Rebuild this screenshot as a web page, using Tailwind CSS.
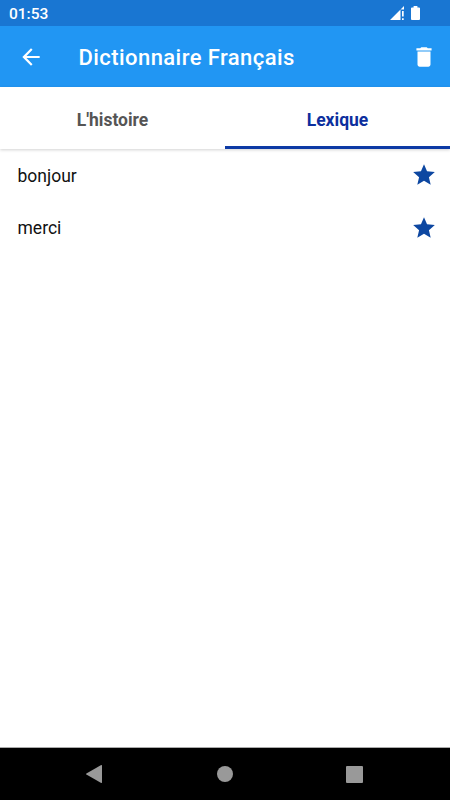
<!DOCTYPE html>
<html lang="fr">
  <head>
    <meta charset="UTF-8">
    <meta name="viewport" content="width=device-width, initial-scale=1.0">
    <title>Dictionnaire Français</title>
    <script src="https://cdn.jsdelivr.net/npm/@tailwindcss/browser@4"></script>
  </head>
  <body class="font-[Roboto,sans-serif] bg-white h-screen flex flex-col overflow-hidden">

    <!-- status bar -->
    <div class="h-[26px] shrink-0 bg-[#1976d2] text-white flex items-center justify-between pl-[9px] pr-[30.5px]">
      <span class="text-[15.5px] leading-none font-medium pt-[3px]">01:53</span>
      <div class="flex items-center gap-[7px]">
        <svg class="w-[14px] h-[14px]" viewBox="0 0 14 14" fill="currentColor">
          <path d="M0 14 L14 0 V3.500 H10.500 V14Z" />
          <path d="M12 5h1.700v5.500H12zM12 12.200h1.700V14H12z" />
        </svg>
        <svg class="w-[9px] h-[14px]" viewBox="0 0 9 14" fill="currentColor">
          <path d="M2.6 0h3.8v1.4h1.7c.5 0 .9.4.9.9v10.8c0 .5-.4.9-.9.9H.9c-.5 0-.9-.4-.9-.9V2.3c0-.5.4-.9.9-.9h1.7z" />
        </svg>
      </div>
    </div>

    <header class="h-[61px] shrink-0 bg-[#2196f3] text-white flex items-center pl-[18px] pr-[13px]">
      <button aria-label="Retour">
        <svg class="w-[26px] h-[26px]" viewBox="0 0 24 24" fill="currentColor">
          <path d="M20 11H7.83l5.59-5.59L12 4l-8 8 8 8 1.410-1.410L7.830 13H20v-2z" />
        </svg>
      </button>
      <h1 class="ml-[34.5px] pt-[3px] flex-1 text-[22px] leading-none font-medium tracking-[0.43px] whitespace-nowrap">Dictionnaire Français</h1>
      <button aria-label="Supprimer">
        <svg class="w-[26px] h-[26px]" viewBox="0 0 24 24" fill="currentColor">
          <path d="M6 19c0 1.100.9 2 2 2h8c1.100 0 2-.9 2-2V7H6v12zM19 4h-3.500l-1-1h-5l-1 1H5v2h14V4z" />
        </svg>
      </button>
    </header>

    <nav class="h-[61.5px] shrink-0 grid grid-cols-2 text-[17.5px] font-bold shadow-[0_1px_3px_rgba(0,0,0,0.18)]">
      <a href="#" class="flex items-center justify-center pt-[7px] text-[#555555] border-b-[3px] border-transparent">L'histoire</a>
      <a href="#" class="flex items-center justify-center pt-[7px] text-[#0d2f9e] border-b-[3px] border-[#0d3aa5]">Lexique</a>
    </nav>

    <main class="flex-1">
      <ul class="text-[17.5px] text-[#111111]">
        <li class="h-[52.5px] flex items-center justify-between pl-[17.5px] pr-[13px]">
          <span class="pt-[2px]">bonjour</span>
          <svg class="w-[26px] h-[27px] pt-px text-[#0d47a1]" viewBox="0 0 24 24" fill="currentColor">
            <path d="M12 17.270L18.180 21l-1.640-7.030L22 9.240l-7.190-.61L12 2 9.190 8.630 2 9.240l5.460 4.730L5.820 21z" />
          </svg>
        </li>
        <li class="h-[52.5px] flex items-center justify-between pl-[17.5px] pr-[13px]">
          <span class="pt-[2px]">merci</span>
          <svg class="w-[26px] h-[27px] pt-px text-[#0d47a1]" viewBox="0 0 24 24" fill="currentColor">
            <path d="M12 17.270L18.180 21l-1.640-7.030L22 9.240l-7.190-.61L12 2 9.190 8.630 2 9.240l5.460 4.730L5.820 21z" />
          </svg>
        </li>
      </ul>
    </main>

    <!-- system navigation -->
    <footer class="h-[53px] shrink-0 bg-black border-t border-[#aaaaaa] text-[#999999] flex items-center justify-between pl-[86px] pr-[87px]">
      <svg class="w-[16px] h-[18px]" viewBox="0 0 16 18" fill="currentColor">
        <path d="M15.200 0.100 C15.700 -.1 16 .1 16 .7 V17.300 C16 17.900 15.700 18.100 15.200 17.900 L.4 9.500 C0 9.200 0 8.800 .4 8.500Z" />
      </svg>
      <span class="w-[16px] h-[16px] ml-px rounded-full bg-current"></span>
      <span class="w-[17px] h-[17px] rounded-[1px] bg-current"></span>
    </footer>

  </body>
</html>
